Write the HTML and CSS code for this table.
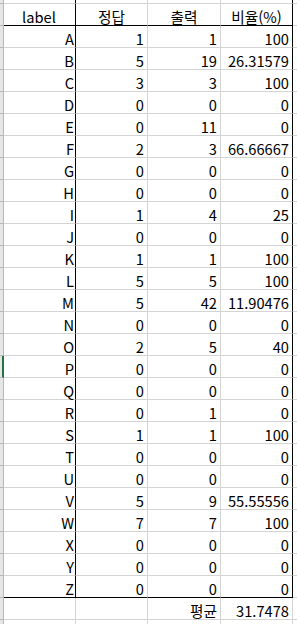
FILE: index.html
```html
<!DOCTYPE html>
<html lang="ko">
<head>
<meta charset="utf-8">
<link rel="stylesheet" href="styles.css">
</head>
<body>
<div class="sheet">
  <div class="rh"></div><div class="c lab"></div><div class="c"></div><div class="c"></div><div class="c rb"></div><div class="c e"></div>

  <div class="rh"></div><div class="c h lab hb">label</div><div class="c h hb">정답</div><div class="c h hb">출력</div><div class="c h hb rb">비율(%)</div><div class="c e"></div>

  <div class="rh"></div><div class="c lab">A</div><div class="c">1</div><div class="c">1</div><div class="c rb">100</div><div class="c e"></div>
  <div class="rh"></div><div class="c lab">B</div><div class="c">5</div><div class="c">19</div><div class="c rb">26.31579</div><div class="c e"></div>
  <div class="rh"></div><div class="c lab">C</div><div class="c">3</div><div class="c">3</div><div class="c rb">100</div><div class="c e"></div>
  <div class="rh"></div><div class="c lab">D</div><div class="c">0</div><div class="c">0</div><div class="c rb">0</div><div class="c e"></div>
  <div class="rh"></div><div class="c lab">E</div><div class="c">0</div><div class="c">11</div><div class="c rb">0</div><div class="c e"></div>
  <div class="rh"></div><div class="c lab">F</div><div class="c">2</div><div class="c">3</div><div class="c rb">66.66667</div><div class="c e"></div>
  <div class="rh"></div><div class="c lab">G</div><div class="c">0</div><div class="c">0</div><div class="c rb">0</div><div class="c e"></div>
  <div class="rh"></div><div class="c lab">H</div><div class="c">0</div><div class="c">0</div><div class="c rb">0</div><div class="c e"></div>
  <div class="rh"></div><div class="c lab">I</div><div class="c">1</div><div class="c">4</div><div class="c rb">25</div><div class="c e"></div>
  <div class="rh"></div><div class="c lab">J</div><div class="c">0</div><div class="c">0</div><div class="c rb">0</div><div class="c e"></div>
  <div class="rh"></div><div class="c lab">K</div><div class="c">1</div><div class="c">1</div><div class="c rb">100</div><div class="c e"></div>
  <div class="rh"></div><div class="c lab">L</div><div class="c">5</div><div class="c">5</div><div class="c rb">100</div><div class="c e"></div>
  <div class="rh"></div><div class="c lab">M</div><div class="c">5</div><div class="c">42</div><div class="c rb">11.90476</div><div class="c e"></div>
  <div class="rh"></div><div class="c lab">N</div><div class="c">0</div><div class="c">0</div><div class="c rb">0</div><div class="c e"></div>
  <div class="rh"></div><div class="c lab">O</div><div class="c">2</div><div class="c">5</div><div class="c rb">40</div><div class="c e"></div>
  <div class="rh sel"></div><div class="c lab">P</div><div class="c">0</div><div class="c">0</div><div class="c rb">0</div><div class="c e"></div>
  <div class="rh"></div><div class="c lab">Q</div><div class="c">0</div><div class="c">0</div><div class="c rb">0</div><div class="c e"></div>
  <div class="rh"></div><div class="c lab">R</div><div class="c">0</div><div class="c">1</div><div class="c rb">0</div><div class="c e"></div>
  <div class="rh"></div><div class="c lab">S</div><div class="c">1</div><div class="c">1</div><div class="c rb">100</div><div class="c e"></div>
  <div class="rh"></div><div class="c lab">T</div><div class="c">0</div><div class="c">0</div><div class="c rb">0</div><div class="c e"></div>
  <div class="rh"></div><div class="c lab">U</div><div class="c">0</div><div class="c">0</div><div class="c rb">0</div><div class="c e"></div>
  <div class="rh"></div><div class="c lab">V</div><div class="c">5</div><div class="c">9</div><div class="c rb">55.55556</div><div class="c e"></div>
  <div class="rh"></div><div class="c lab">W</div><div class="c">7</div><div class="c">7</div><div class="c rb">100</div><div class="c e"></div>
  <div class="rh"></div><div class="c lab">X</div><div class="c">0</div><div class="c">0</div><div class="c rb">0</div><div class="c e"></div>
  <div class="rh"></div><div class="c lab">Y</div><div class="c">0</div><div class="c">0</div><div class="c rb">0</div><div class="c e"></div>
  <div class="rh rhb"></div><div class="c lab bb">Z</div><div class="c bb">0</div><div class="c bb">0</div><div class="c rb bb">0</div><div class="c e"></div>

  <div class="rh"></div><div class="c"></div><div class="c"></div><div class="c">평균</div><div class="c">31.7478</div><div class="c e"></div>
  <div class="rh"></div><div class="c"></div><div class="c"></div><div class="c"></div><div class="c"></div><div class="c e"></div>
</div>
</body>
</html>
```

FILE: styles.css
```css
html, body {
  margin: 0;
  padding: 0;
  background: #ffffff;
  overflow: hidden;
}

.sheet {
  display: grid;
  grid-template-columns: 4px 72px 72px 73px 72px 1fr;
  grid-auto-rows: 22px;
  grid-template-rows: 4px;
  font-family: "Noto Sans CJK KR", "Noto Sans", sans-serif;
  font-size: 14.67px;
  color: #000000;
}

.rh {
  box-sizing: border-box;
  background: #e6e6e6;
  border-right: 1px solid #b8b8b8;
  border-bottom: 1px solid #b8b8b8;
}

.rh.sel {
  border-right: 2px solid #217346;
}

.c {
  box-sizing: border-box;
  border-right: 1px solid #d4d4d4;
  border-bottom: 1px solid #d4d4d4;
  display: flex;
  align-items: flex-end;
  justify-content: flex-end;
  padding: 0 3px 1px 0;
  line-height: 15px;
  white-space: nowrap;
}

.c.h {
  justify-content: center;
  padding-right: 0;
}

.c.lab {
  border-right-color: #000000;
  padding-right: 1px;
}

.c.rb {
  border-right-color: #000000;
}

.c.hb {
  border-bottom-color: #000000;
}

.c.bb {
  border-bottom-color: #000000;
}

.c.e {
  border-right: none;
}
```
